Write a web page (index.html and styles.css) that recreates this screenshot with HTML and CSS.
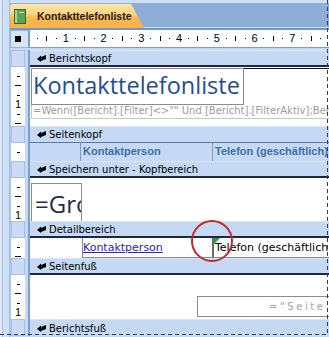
FILE: index.html
```html
<!DOCTYPE html>
<html lang="de">
<head>
<meta charset="UTF-8" />
<title>Kontakttelefonliste</title>
<link rel="stylesheet" href="styles.css">
</head>
<body>
<div class="app">
  <div class="strip"></div>
  <div class="main">
    <div class="tabbar">
      <div class="tab">
        <svg class="tab-icon" width="12" height="15" viewBox="0 0 12 15">
          <rect x="0.5" y="0.5" width="11" height="14" fill="#5da455" stroke="#2f6a2c"/>
          <rect x="1" y="1" width="2" height="13" fill="#a8d49e"/>
          <rect x="5" y="3" width="5" height="1" fill="#c9e7c1"/>
        </svg>
        <span>Kontakttelefonliste</span>
      </div>
    </div>

    <div class="ruler-row">
      <div class="corner"><span class="select-box"></span></div>
      <div class="hruler">
        <i class="d"></i><i class="t"></i><i class="d"></i><b>1</b>
        <i class="d"></i><i class="t"></i><i class="d"></i><b>2</b>
        <i class="d"></i><i class="t"></i><i class="d"></i><b>3</b>
        <i class="d"></i><i class="t"></i><i class="d"></i><b>4</b>
        <i class="d"></i><i class="t"></i><i class="d"></i><b>5</b>
        <i class="d"></i><i class="t"></i><i class="d"></i><b>6</b>
        <i class="d"></i><i class="t"></i><i class="d"></i><b>7</b>
        <i class="d"></i><i class="t"></i><i class="d"></i>
      </div>
    </div>

    <!-- Berichtskopf -->
    <div class="bar-row">
      <div class="vr"><div class="vr-btn"></div></div>
      <div class="bar"><svg class="bar-icon" width="9" height="7" viewBox="0 0 9 7"><path d="M0 4 L4 0.5 L4 2 L9 0 L9 4 L4 6 L4 7 Z" fill="#000"/></svg>Berichtskopf</div>
    </div>
    <div class="sec sec-report-head">
      <div class="vr"><div class="vr-in marks"><i class="d"></i><i class="l"></i><i class="d"></i><b>1</b><i class="d"></i><i class="l"></i></div></div>
      <div class="area">
        <div class="title-row">
          <div class="title-box">Kontakttelefonliste</div>
          <div class="title-right"></div>
        </div>
        <div class="formula">=Wenn([Bericht].[Filter]&lt;&gt;"" Und [Bericht].[FilterAktiv];Bericht.Filter;"")</div>
      </div>
    </div>

    <!-- Seitenkopf -->
    <div class="bar-row">
      <div class="vr"><div class="vr-btn"></div></div>
      <div class="bar bar-soft"><svg class="bar-icon" width="9" height="7" viewBox="0 0 9 7"><path d="M0 4 L4 0.5 L4 2 L9 0 L9 4 L4 6 L4 7 Z" fill="#000"/></svg>Seitenkopf</div>
    </div>
    <div class="sec sec-page-head">
      <div class="vr"><div class="vr-in marks"><i class="d"></i><i class="l"></i></div></div>
      <div class="area area-blue">
        <div class="hdr-gap"></div>
        <div class="hdr-label hdr-name">Kontaktperson</div>
        <div class="hdr-label hdr-phone">Telefon (geschäftlich)</div>
      </div>
    </div>

    <!-- Gruppenkopf -->
    <div class="bar-row">
      <div class="vr"><div class="vr-btn"></div></div>
      <div class="bar"><svg class="bar-icon" width="9" height="7" viewBox="0 0 9 7"><path d="M0 4 L4 0.5 L4 2 L9 0 L9 4 L4 6 L4 7 Z" fill="#000"/></svg>Speichern unter - Kopfbereich</div>
    </div>
    <div class="sec sec-group">
      <div class="vr"><div class="vr-in marks"><i class="d"></i><i class="l"></i><i class="d"></i><b>1</b></div></div>
      <div class="area">
        <div class="gro-box">=Gro</div>
      </div>
    </div>

    <!-- Detailbereich -->
    <div class="bar-row">
      <div class="vr"><div class="vr-btn"></div></div>
      <div class="bar"><svg class="bar-icon" width="9" height="7" viewBox="0 0 9 7"><path d="M0 4 L4 0.5 L4 2 L9 0 L9 4 L4 6 L4 7 Z" fill="#000"/></svg>Detailbereich</div>
    </div>
    <div class="sec sec-detail">
      <div class="vr"><div class="vr-in marks"><i class="d"></i><i class="l"></i></div></div>
      <div class="area">
        <div class="det-gap"></div>
        <div class="det-name"><a>Kontaktperson</a></div>
        <div class="det-phone">Telefon (geschäftlich)</div>
      </div>
    </div>

    <!-- Seitenfuß -->
    <div class="bar-row">
      <div class="vr"><div class="vr-btn"></div></div>
      <div class="bar"><svg class="bar-icon" width="9" height="7" viewBox="0 0 9 7"><path d="M0 4 L4 0.5 L4 2 L9 0 L9 4 L4 6 L4 7 Z" fill="#000"/></svg>Seitenfuß</div>
    </div>
    <div class="sec sec-page-foot">
      <div class="vr"><div class="vr-in marks"><i class="d"></i><i class="l"></i><i class="d"></i><b>1</b></div></div>
      <div class="area">
        <div class="page-box">="Seite " &amp; [Seite]</div>
      </div>
    </div>

    <!-- Berichtsfuß -->
    <div class="bar-row bar-last">
      <div class="vr"><div class="vr-btn"></div></div>
      <div class="bar"><svg class="bar-icon" width="9" height="7" viewBox="0 0 9 7"><path d="M0 4 L4 0.5 L4 2 L9 0 L9 4 L4 6 L4 7 Z" fill="#000"/></svg>Berichtsfuß</div>
    </div>
  </div>

  <svg class="mark-circle" width="44" height="44" viewBox="0 0 44 44"><circle cx="22" cy="22" r="20" fill="none" stroke="#c4262e" stroke-width="2"/></svg>
  <div class="frame"></div>
</div>
</body>
</html>
```

FILE: styles.css
```css
* {
  box-sizing: border-box;
}
body {
  margin: 0;
  background: #c5d9f4;
  font-family: "DejaVu Sans", sans-serif;
  font-size: 10px;
  color: #000;
  overflow: hidden;
}
.app {
  position: relative;
  display: flex;
  width: 329px;
  height: 337px;
  overflow: hidden;
}

/* left edge strip */
.strip {
  width: 10px;
  flex: none;
  background: linear-gradient(to right, #dce8f7 0 2px, #a9c2e3 2px 3px, #cfe0f5 3px 9px, #a2bcdf 9px 10px);
}
.main {
  width: 319px;
  flex: none;
  display: flex;
  flex-direction: column;
}

/* document tab */
.tabbar {
  height: 30px;
  flex: none;
  background: linear-gradient(#cfdff4 0 3px, #8eaed8 3px 27px, #c9dbf2 27px);
  border-bottom: 2px solid #7396c8;
}
.tab {
  margin-top: 4px;
  height: 24px;
  width: 134px;
  display: flex;
  align-items: center;
  padding-left: 4px;
  gap: 11px;
  background: linear-gradient(#fde8ad, #fcd384 40%, #f8b64c 62%, #f7b34a);
  border-top-left-radius: 3px;
  clip-path: polygon(0 0, 121px 0, 134px 100%, 0 100%);
  font-family: "Liberation Sans", sans-serif;
  font-weight: bold;
  font-size: 10.5px;
  color: #1e1e1e;
}
.tab-icon {
  flex: none;
}

/* horizontal ruler */
.ruler-row {
  display: flex;
  height: 20px;
  flex: none;
}
.corner {
  width: 20px;
  height: 18px;
  background: #d6e4f6;
  border: 1px solid #98b3da;
  border-right: 2px solid #7f9fcb;
  display: flex;
  align-items: center;
  padding-left: 4px;
}
.select-box {
  width: 6px;
  height: 6px;
  background: #000;
}
.hruler {
  flex: 1;
  height: 18px;
  background: #fff;
  border-bottom: 1px solid #7e9ec9;
  display: grid;
  grid-template-columns: repeat(31, 9.45px);
  align-items: center;
  justify-items: center;
  padding-left: 2.7px;
  font-family: "Liberation Sans", sans-serif;
  font-size: 11px;
}
.hruler b {
  font-weight: normal;
  line-height: 1;
}
.hruler .d {
  width: 1px;
  height: 1px;
  background: #000;
}
.hruler .t {
  width: 1px;
  height: 5px;
  background: #000;
}

/* vertical ruler column */
.vr {
  width: 20px;
  flex: none;
  background: #c5d9f4;
  border-left: 1px solid #b3c9e8;
  border-right: 2px solid #7f9fcb;
  padding-right: 3px;
}
.vr-in {
  height: 100%;
  background: #fff;
}
.vr-btn {
  height: 100%;
  background: #cadcf5;
  border: 1px solid #a6bfe2;
}
.marks {
  display: grid;
  grid-auto-rows: 9.45px;
  padding-top: 4.7px;
  justify-items: center;
  align-items: center;
  overflow: hidden;
  font-family: "Liberation Sans", sans-serif;
  font-size: 11px;
}
.marks b {
  font-weight: normal;
  line-height: 1;
}
.marks .d {
  width: 3px;
  height: 1px;
  background: #000;
}
.marks .l {
  width: 6px;
  height: 1px;
  background: #000;
}

/* section bars */
.bar-row {
  display: flex;
  height: 17px;
  flex: none;
}
.bar {
  flex: 1;
  display: flex;
  align-items: center;
  gap: 3px;
  padding-left: 7px;
  background: #c5d9f4;
  border-top: 1px solid #dbe7f7;
  border-bottom: 2px solid #1c2940;
  white-space: nowrap;
}
.bar-soft {
  border-bottom: 1px solid #5b7ba6;
}
.bar-last .bar {
  border-bottom: none;
}
.bar-icon {
  flex: none;
}

/* sections */
.sec {
  display: flex;
  flex: none;
}
.sec-report-head { height: 59px; }
.sec-page-head { height: 18px; }
.sec-group { height: 43px; }
.sec-detail { height: 20px; }
.sec-page-foot { height: 44px; }
.area {
  flex: 1;
  background: #fff;
  overflow: hidden;
  display: flex;
  min-width: 0;
}
.sec-report-head .area,
.sec-group .area,
.sec-page-foot .area {
  flex-direction: column;
}

/* Berichtskopf */
.title-row {
  display: flex;
  height: 37px;
  margin-top: 1px;
}
.title-box {
  width: 213px;
  margin-left: 1px;
  border: 1px solid #8c8c8c;
  padding-left: 1px;
  font-family: "Open Sans", sans-serif;
  font-size: 23.5px;
  line-height: 33px;
  color: #1f4e8c;
  white-space: nowrap;
  overflow: hidden;
}
.title-right {
  flex: 1;
  border-top: 1px solid #111;
}
.formula {
  height: 14px;
  margin-left: 1px;
  border: 1px solid #c8c8c8;
  border-top: none;
  border-right: none;
  padding-left: 1px;
  line-height: 12px;
  color: #9c9c9c;
  white-space: nowrap;
  overflow: hidden;
}

/* Seitenkopf */
.area-blue {
  background: #c5d9f4;
}
.hdr-gap {
  width: 50px;
  flex: none;
}
.hdr-label {
  border-left: 1px solid #7d9ac2;
  padding-left: 2px;
  font-family: "Liberation Sans", sans-serif;
  font-weight: bold;
  font-size: 11px;
  line-height: 17px;
  color: #3f6ea6;
  white-space: nowrap;
  overflow: hidden;
}
.hdr-name {
  width: 132px;
  flex: none;
}
.hdr-phone {
  flex: 1;
}

/* Gruppenkopf */
.gro-box {
  width: 51px;
  height: 38px;
  margin: 5px 0 0 1px;
  border: 1px solid #8c8c8c;
  border-bottom: none;
  padding: 3px 0 0 3px;
  font-family: "Open Sans", sans-serif;
  font-size: 24px;
  color: #1f2d4d;
  white-space: nowrap;
  overflow: hidden;
}

/* Detailbereich */
.det-gap {
  width: 52px;
  flex: none;
}
.det-name {
  width: 130px;
  flex: none;
  border-left: 1px solid #8c8c8c;
  border-bottom: 1px solid #8c8c8c;
  font-size: 11px;
  line-height: 19px;
  white-space: nowrap;
  overflow: hidden;
}
.det-name a {
  color: #2424c8;
  text-decoration: underline;
}
.det-phone {
  position: relative;
  flex: 1;
  border-left: 2px solid #6b6b6b;
  border-bottom: 1px solid #8c8c8c;
  padding-left: 1px;
  font-size: 11px;
  line-height: 19px;
  white-space: nowrap;
  overflow: hidden;
}
.det-phone::before {
  content: "";
  position: absolute;
  left: 0;
  top: 0;
  border-top: 6px solid #1fa83c;
  border-right: 6px solid transparent;
}

/* Seitenfuß */
.page-box {
  width: 160px;
  height: 21px;
  margin: 21px 0 0 167px;
  border: 1px solid #8c8c8c;
  padding-left: 71px;
  line-height: 19px;
  color: #a3a3a3;
  letter-spacing: 2.6px;
  white-space: nowrap;
  flex: none;
}

/* overlays */
.mark-circle {
  position: absolute;
  left: 190px;
  top: 219px;
}
.frame {
  position: absolute;
  left: 0;
  top: 0;
  width: 328px;
  height: 335px;
  pointer-events: none;
  background:
    repeating-linear-gradient(to bottom, #3a3a3a 0 4px, transparent 4px 7px) right top / 1px 100% no-repeat,
    repeating-linear-gradient(to right, #3a3a3a 0 4px, transparent 4px 7px) left bottom / 100% 1px no-repeat;
}
```
